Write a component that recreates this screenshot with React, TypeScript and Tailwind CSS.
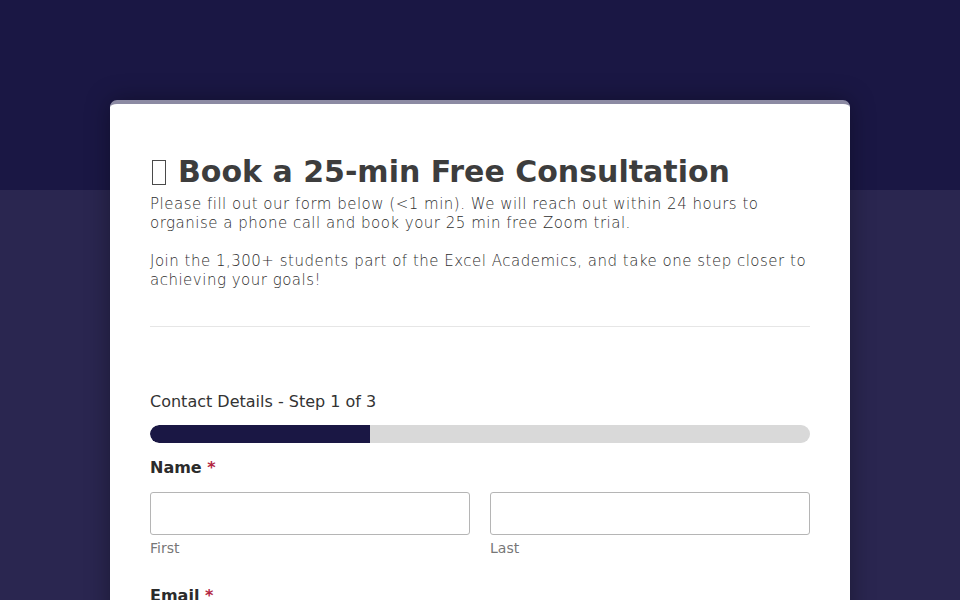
import React from "react";

export default function App() {
  return (
    <div
      className="relative h-[600px] w-[960px] overflow-hidden bg-[#2a2650]"
      style={{ fontFamily: '"DejaVu Sans", sans-serif' }}
    >
      <div className="absolute left-0 top-0 h-[190px] w-full bg-[#1a1744]" />
      <div className="relative flex justify-center pt-[100px]">
        <div className="w-[740px] rounded-t-[7px] border-t-4 border-[#8c8aa3] bg-white px-[40px] pt-[50px] shadow-[0_0_24px_rgba(0,0,0,0.35)]">
          <h1 className="flex items-center text-[30px] font-bold leading-[36px] text-[#3d3d3d]">
            <span className="ml-[2px] mr-[12px] inline-block h-[25px] w-[14px] border-[1.5px] border-[#4a4a4a]" />
            Book a 25-min Free Consultation
          </h1>
          <div className="mt-[5px] text-[15px] font-extralight leading-[19px] tracking-[0.5px] text-[#2e2e2e]">
            <p>
              Please fill out our form below (&lt;1 min). We will reach out within 24 hours to
              organise a phone call and book your 25 min free Zoom trial.
            </p>
            <p className="mt-[19px]">
              Join the 1,300+ students part of the Excel Academics, and take one step closer to
              achieving your goals!
            </p>
          </div>
          <div className="mt-[36px] h-px bg-[#e6e6e6]" />
          <div className="mt-[65px] text-[16px] leading-[20px] text-[#333]">
            Contact Details - Step 1 of 3
          </div>
          <div className="mt-[13px] h-[18px] w-full overflow-hidden rounded-full bg-[#d9d9d9]">
            <div className="h-full w-1/3 rounded-l-full bg-[#1a1744]" />
          </div>
          <div className="mt-[15px] text-[16px] font-bold leading-[20px] text-[#2b2b2b]">
            Name <span className="text-[#b3263f]">*</span>
          </div>
          <div className="mt-[14px] grid grid-cols-2 gap-[20px]">
            <div>
              <div className="h-[43px] rounded-[3px] border border-[#b5b5b5] bg-white" />
              <div className="mt-[4px] text-[14px] leading-[18px] text-[#777]">First</div>
            </div>
            <div>
              <div className="h-[43px] rounded-[3px] border border-[#b5b5b5] bg-white" />
              <div className="mt-[4px] text-[14px] leading-[18px] text-[#777]">Last</div>
            </div>
          </div>
          <div className="mt-[29px] text-[16px] font-bold leading-[20px] text-[#2b2b2b]">
            Email <span className="text-[#b3263f]">*</span>
          </div>
          <div className="h-[60px]" />
        </div>
      </div>
    </div>
  );
}
